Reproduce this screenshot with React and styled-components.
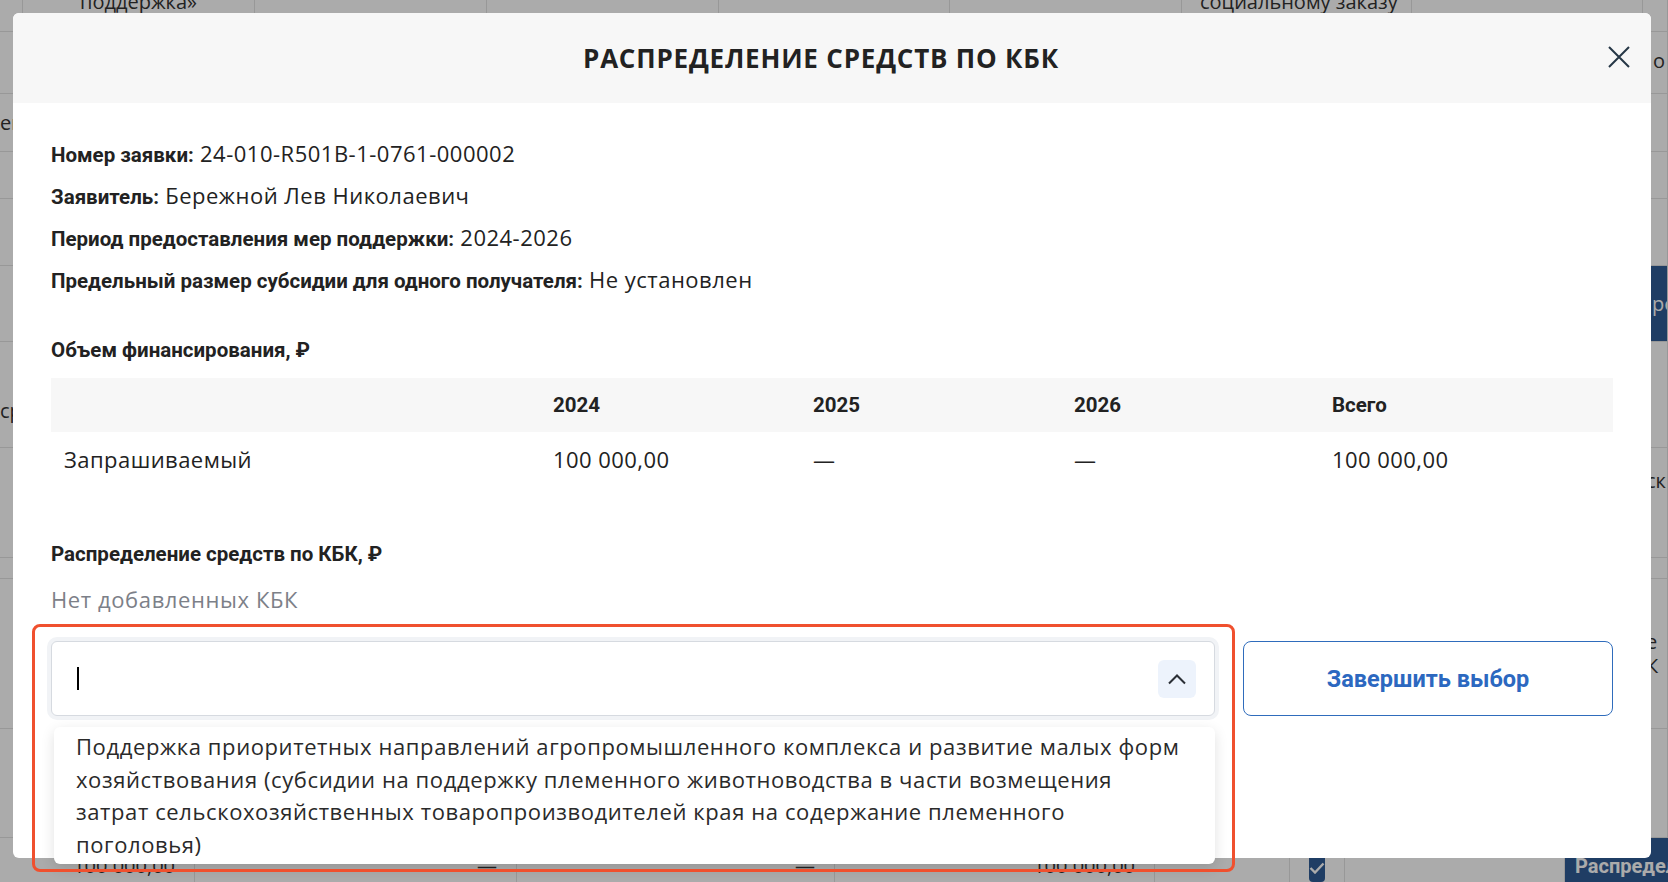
import React from "react";
import styled, { createGlobalStyle } from "styled-components";

const REGULAR = `"Open Sans", "Noto Sans", sans-serif`;
const BOLD = `Roboto, "Noto Sans", sans-serif`;

const GlobalStyle = createGlobalStyle`
  html, body {
    margin: 0;
    padding: 0;
  }
  body {
    font-family: ${REGULAR};
    color: #1f2125;
    overflow: hidden;
  }
`;

const Screen = styled.div`
  position: relative;
  width: 1668px;
  height: 882px;
  overflow: hidden;
  background: #fff;
`;

// page behind the modal
const BgGrid = styled.div`
  display: grid;
  grid-template-columns: 23px 232px 232px 232px 231px 232px 230px 231px 25px;
  grid-template-rows: 32px 62px 58px 47px 67px 76px 106px 110px 21px 150px 109px;
  font-size: 20px;
  color: #333;
`;

const BgCell = styled.div`
  border-right: 1px solid #e3e3e3;
  border-bottom: 1px solid #e3e3e3;
  padding: ${(p) => p.$pad || "0 10px"};
  display: flex;
  align-items: ${(p) => p.$align || "center"};
  white-space: nowrap;
  overflow: hidden;
  line-height: 24px;
  background: ${(p) => p.$bg || "transparent"};
  color: ${(p) => p.$color || "inherit"};
`;

const BgRow = styled.div`
  display: grid;
  grid-template-columns: 195px 322px 318px 320px 135px 55px 220px 103px;
  height: 44px;
  font-size: 20px;
  line-height: 24px;
  color: #333;
`;

const BgValue = styled.div`
  display: flex;
  align-items: flex-start;
  justify-content: ${(p) => p.$justify || "flex-end"};
  padding: 16px 19px 0;
  border-right: 1px solid #e3e3e3;
  white-space: nowrap;
  overflow: hidden;
`;

const BgCheck = styled.div`
  width: 28px;
  height: 28px;
  border-radius: 4px;
  background: #2f5c96;
  display: flex;
  align-items: center;
  justify-content: center;
  margin-top: 0;
`;

const BgButton = styled.div`
  background: #2f5c96;
  color: #fff;
  font-family: ${BOLD};
  font-weight: 700;
  display: flex;
  align-items: flex-start;
  padding: 16px 10px 0;
  white-space: nowrap;
  overflow: hidden;
`;

const Backdrop = styled.div`
  position: absolute;
  inset: 0;
  background: rgba(0, 0, 0, 0.33);
`;

const Modal = styled.div`
  position: absolute;
  top: 13px;
  left: 13px;
  width: 1638px;
  height: 845px;
  background: #fff;
  border-radius: 6px;
  display: flex;
  flex-direction: column;
`;

const Header = styled.div`
  position: relative;
  height: 90px;
  flex-shrink: 0;
  background: #f7f7f7;
  border-radius: 6px 6px 0 0;
  display: flex;
  align-items: center;
  justify-content: center;
  padding-right: 22px;
`;

const Title = styled.h2`
  margin: 0;
  font-family: ${REGULAR};
  font-size: 26px;
  letter-spacing: 0.8px;
  font-weight: 700;
  color: #222;
`;

const CloseButton = styled.button`
  position: absolute;
  top: 32px;
  right: 20px;
  width: 24px;
  height: 24px;
  padding: 0;
  border: none;
  background: transparent;
  cursor: pointer;
  display: flex;
`;

const Body = styled.div`
  padding: 37px 38px 0;
`;

const InfoList = styled.div`
  display: flex;
  flex-direction: column;
  gap: 14px;
`;

const InfoLine = styled.div`
  height: 28px;
  font-size: 22px;
  letter-spacing: 0.5px;
  line-height: 27px;
  color: #222;
  white-space: nowrap;
`;

const Label = styled.span`
  font-family: ${BOLD};
  font-size: 20.5px;
  letter-spacing: 0;
  font-weight: 700;
`;

const SectionTitle = styled.h3`
  margin: ${(p) => p.$top || "42px"} 0 0;
  font-family: ${BOLD};
  font-size: 20.5px;
  line-height: 28px;
  font-weight: 700;
  color: #222;
`;

const Table = styled.div`
  margin-top: 14px;
`;

const TableRow = styled.div`
  display: grid;
  grid-template-columns: 489px 260px 261px 258px 1fr;
  height: 54px;
  align-items: center;
  background: ${(p) => (p.$head ? "#f7f7f7" : "transparent")};
`;

const Cell = styled.div`
  padding: 0 13px;
  font-family: ${(p) => (p.$bold ? BOLD : REGULAR)};
  font-size: ${(p) => (p.$bold ? "20.5px" : "22px")};
  letter-spacing: ${(p) => (p.$bold ? "0" : "0.45px")};
  font-weight: ${(p) => (p.$bold ? 700 : 400)};
  color: #222;
`;

const EmptyText = styled.div`
  margin-top: 17px;
  font-size: 22px;
  letter-spacing: 0.6px;
  line-height: 28px;
  color: #7c8088;
`;

const SelectRow = styled.div`
  margin-top: 28px;
  display: flex;
  gap: 28px;
`;

const SelectField = styled.div`
  position: relative;
  flex: 1;
`;

const SelectBox = styled.div`
  height: 75px;
  box-sizing: border-box;
  border: 1px solid #d6dae0;
  border-radius: 6px;
  box-shadow: 0 0 0 4px #f1f3f6;
  display: flex;
  align-items: center;
  padding: 0 18px 0 25px;
  background: #fff;
`;

const Caret = styled.span`
  width: 1.6px;
  height: 23px;
  background: #000;
`;

const ToggleButton = styled.button`
  margin-left: auto;
  width: 38px;
  height: 38px;
  border: none;
  border-radius: 6px;
  background: #edf3fc;
  display: flex;
  align-items: center;
  justify-content: center;
  padding: 0;
`;

const Dropdown = styled.div`
  position: absolute;
  top: calc(100% + 11px);
  left: 3px;
  right: 0;
  box-sizing: border-box;
  height: 137px;
  padding: 3px 8px 0 22px;
  background: #fff;
  border-radius: 6px;
  box-shadow: 0 4px 14px rgba(0, 0, 0, 0.12);
  font-size: 22px;
  letter-spacing: 0.6px;
  line-height: 32.5px;
  color: #2a2a2a;
  white-space: nowrap;
  z-index: 2;
`;

const FocusOutline = styled.div`
  position: absolute;
  left: -19px;
  top: -17px;
  width: 1203px;
  height: 248px;
  box-sizing: border-box;
  border: 3px solid #f0502e;
  border-radius: 8px;
  pointer-events: none;
  z-index: 3;
`;

const FinishButton = styled.button`
  width: 370px;
  height: 75px;
  border: 1.5px solid #2f6cbc;
  border-radius: 8px;
  background: #fff;
  color: #2c68c0;
  font-family: ${BOLD};
  font-size: 23.5px;
  font-weight: 700;
  cursor: pointer;
`;

const rows = [
  { label: "Номер заявки:", value: "24-010-R501B-1-0761-000002" },
  { label: "Заявитель:", value: "Бережной Лев Николаевич" },
  { label: "Период предоставления мер поддержки:", value: "2024-2026" },
  {
    label: "Предельный размер субсидии для одного получателя:",
    value: "Не установлен",
  },
];

const BackgroundPage = () => (
  <>
    <BgGrid>
      <BgCell $align="flex-end" $pad="0 0 17px 0" />
      <BgCell $align="flex-end" $pad="0 0 17px 57px">
        поддержка»
      </BgCell>
      <BgCell />
      <BgCell />
      <BgCell />
      <BgCell />
      <BgCell $align="flex-end" $pad="0 0 17px 18px">
        социальному заказу
      </BgCell>
      <BgCell />
      <BgCell />

      <BgCell />
      <BgCell />
      <BgCell />
      <BgCell />
      <BgCell />
      <BgCell />
      <BgCell />
      <BgCell />
      <BgCell $pad="0 0 4px 10px">о</BgCell>

      <BgCell $pad="0">ей</BgCell>
      <BgCell />
      <BgCell />
      <BgCell />
      <BgCell />
      <BgCell />
      <BgCell />
      <BgCell />
      <BgCell />

      {Array.from({ length: 18 }).map((_, i) => (
        <BgCell key={`a${i}`} />
      ))}

      <BgCell />
      <BgCell />
      <BgCell />
      <BgCell />
      <BgCell />
      <BgCell />
      <BgCell />
      <BgCell />
      <BgCell $bg="#2f5c96" $color="#fff" $pad="0 0 0 9px">
        ре
      </BgCell>

      <BgCell $align="flex-start" $pad="57px 0 0 0">
        ср
      </BgCell>
      {Array.from({ length: 8 }).map((_, i) => (
        <BgCell key={`b${i}`} />
      ))}

      {Array.from({ length: 8 }).map((_, i) => (
        <BgCell key={`c${i}`} />
      ))}
      <BgCell $align="flex-start" $pad="21px 0 0 3px">
        ск
      </BgCell>

      {Array.from({ length: 9 }).map((_, i) => (
        <BgCell key={`d${i}`} />
      ))}

      {Array.from({ length: 8 }).map((_, i) => (
        <BgCell key={`e${i}`} />
      ))}
      <BgCell $pad="0 0 0 3px">
        е<br />К
      </BgCell>

      {Array.from({ length: 9 }).map((_, i) => (
        <BgCell key={`f${i}`} />
      ))}
    </BgGrid>
    <BgRow>
      <BgValue>100 000,00</BgValue>
      <BgValue>—</BgValue>
      <BgValue>—</BgValue>
      <BgValue>100 000,00</BgValue>
      <BgValue />
      <BgValue $justify="center">
        <BgCheck>
          <svg width="16" height="12" viewBox="0 0 16 12">
            <path d="M1.5 6l4.5 4.5L14.5 1.5" fill="none" stroke="#fff" strokeWidth="2.4" />
          </svg>
        </BgCheck>
      </BgValue>
      <BgValue />
      <BgButton>Распределить</BgButton>
    </BgRow>
  </>
);

const App = () => {
  return (
    <>
      <GlobalStyle />
      <Screen>
        <BackgroundPage />
        <Backdrop />
        <Modal>
          <Header>
            <Title>РАСПРЕДЕЛЕНИЕ СРЕДСТВ ПО КБК</Title>
            <CloseButton aria-label="Закрыть">
              <svg width="24" height="24" viewBox="0 0 24 24">
                <path d="M2 2L22 22M22 2L2 22" stroke="#263746" strokeWidth="2" fill="none" />
              </svg>
            </CloseButton>
          </Header>
          <Body>
            <InfoList>
              {rows.map((r) => (
                <InfoLine key={r.label}>
                  <Label>{r.label}</Label> {r.value}
                </InfoLine>
              ))}
            </InfoList>

            <SectionTitle>Объем финансирования, ₽</SectionTitle>
            <Table>
              <TableRow $head>
                <Cell />
                <Cell $bold>2024</Cell>
                <Cell $bold>2025</Cell>
                <Cell $bold>2026</Cell>
                <Cell $bold>Всего</Cell>
              </TableRow>
              <TableRow>
                <Cell>Запрашиваемый</Cell>
                <Cell>100 000,00</Cell>
                <Cell>—</Cell>
                <Cell>—</Cell>
                <Cell>100 000,00</Cell>
              </TableRow>
            </Table>

            <SectionTitle $top="54px">Распределение средств по КБК, ₽</SectionTitle>
            <EmptyText>Нет добавленных КБК</EmptyText>

            <SelectRow>
              <SelectField>
                <SelectBox>
                  <Caret />
                  <ToggleButton aria-label="Свернуть">
                    <svg width="20" height="12" viewBox="0 0 20 12">
                      <path d="M2 10.5L10 2.5L18 10.5" stroke="#2b2f36" strokeWidth="2" fill="none" />
                    </svg>
                  </ToggleButton>
                </SelectBox>
                <Dropdown>
                  Поддержка приоритетных направлений агропромышленного комплекса и развитие малых форм
                  <br />
                  хозяйствования (субсидии на поддержку племенного животноводства в части возмещения
                  <br />
                  затрат сельскохозяйственных товаропроизводителей края на содержание племенного
                  <br />
                  поголовья)
                </Dropdown>
                <FocusOutline />
              </SelectField>
              <FinishButton>Завершить выбор</FinishButton>
            </SelectRow>
          </Body>
        </Modal>
      </Screen>
    </>
  );
};

export default App;
